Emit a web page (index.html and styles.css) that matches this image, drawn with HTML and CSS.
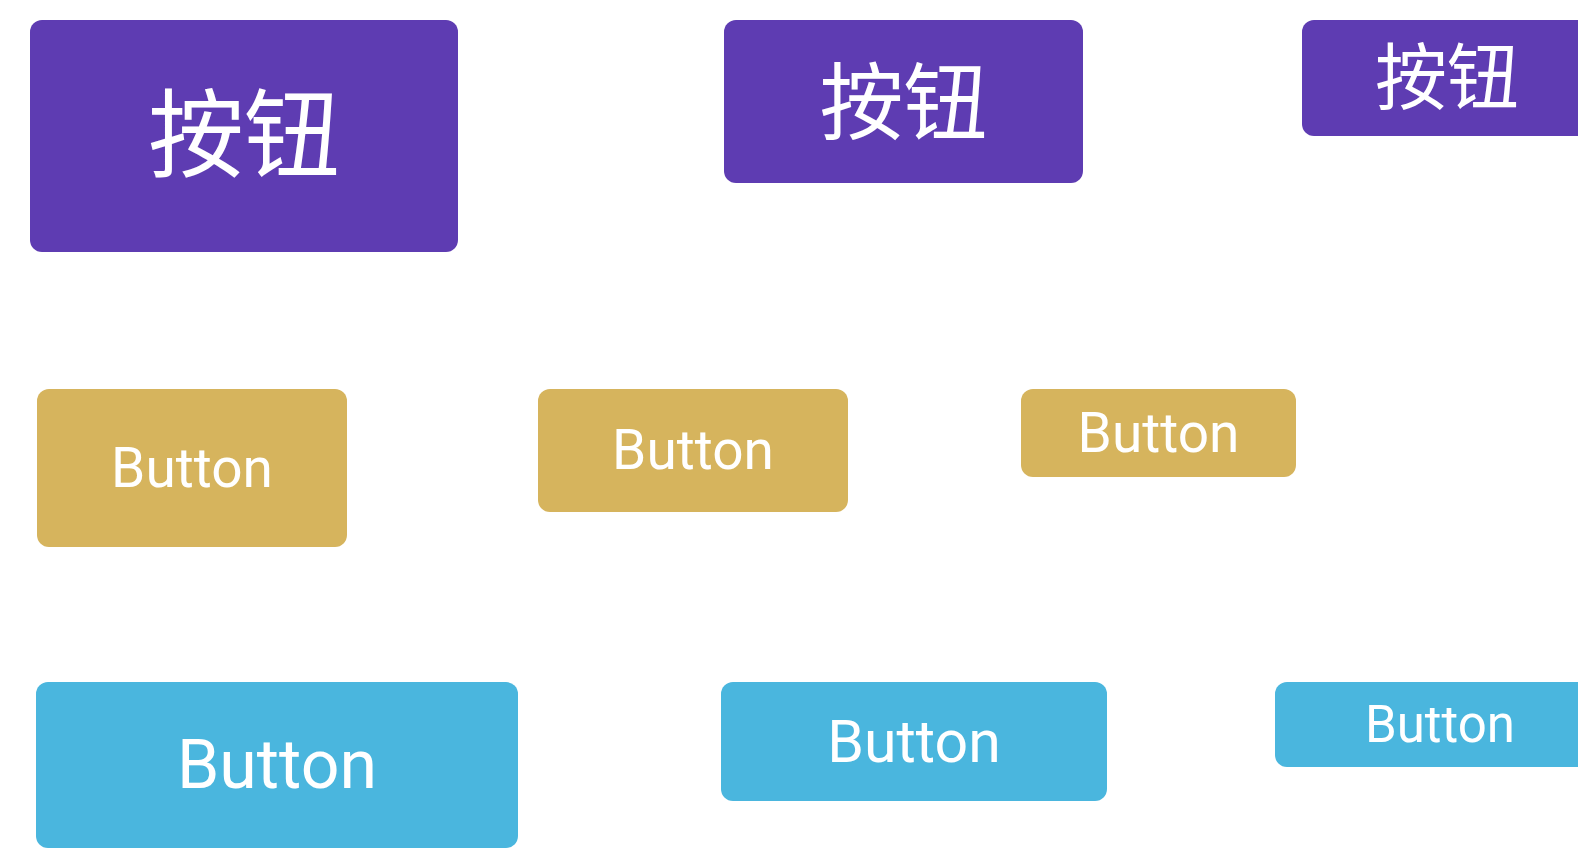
FILE: index.html
```html
<!DOCTYPE html>
<html lang="zh-CN">
<head>
  <meta charset="UTF-8">
  <title>Buttons</title>
  <meta name="viewport" content="width=device-width, initial-scale=1.0">
  <link rel="stylesheet" href="styles.css">
</head>
<body>
  <div class="board">
    <div class="row row-purple">
      <button class="btn purple p1">按钮</button>
      <button class="btn purple p2">按钮</button>
      <button class="btn purple p3">按钮</button>
    </div>

    <div class="row row-gold">
      <button class="btn gold g1">Button</button>
      <button class="btn gold g2">Button</button>
      <button class="btn gold g3">Button</button>
    </div>

    <div class="row row-blue">
      <button class="btn blue c1">Button</button>
      <button class="btn blue c2">Button</button>
      <button class="btn blue c3">Button</button>
    </div>
  </div>
</body>
</html>
```

FILE: styles.css
```css
* { box-sizing: border-box; }

html, body {
  margin: 0;
  height: 100%;
  overflow: hidden;
  background: #ffffff;
}

.board {
  padding-top: 20px;
}

.row {
  display: flex;
  align-items: flex-start;
  flex-wrap: nowrap;
}

.row-gold { margin-top: 137px; }
.row-blue { margin-top: 135px; }

.btn {
  flex-shrink: 0;
  display: flex;
  align-items: center;
  justify-content: center;
  border: none;
  border-radius: 12px;
  padding: 0;
  color: #ffffff;
  font-family: Roboto, "Noto Sans", sans-serif;
  line-height: 1;
  cursor: pointer;
}

/* purple row */
.purple {
  background: #5e3cb2;
  font-family: "Noto Sans CJK SC", "Noto Sans", sans-serif;
}

.p1 { margin-left: 30px; width: 428px; height: 232px; font-size: 96px; padding-bottom: 16px; }
.p2 { margin-left: 266px; width: 359px; height: 163px; font-size: 84px; padding-bottom: 10px; }
.p3 { margin-left: 219px; width: 290px; height: 116px; font-size: 72px; padding-bottom: 12px; }

/* gold row */
.gold {
  background: #d6b45d;
  font-size: 55px;
}

.g1 { margin-left: 37px; width: 310px; height: 158px; }
.g2 { margin-left: 191px; width: 310px; height: 123px; }
.g3 { margin-left: 173px; width: 275px; height: 88px; }

/* blue row */
.blue {
  background: #4ab6de;
}

.c1 { margin-left: 36px; width: 482px; height: 166px; font-size: 68px; }
.c2 { margin-left: 203px; width: 386px; height: 119px; font-size: 59px; }
.c3 { margin-left: 168px; width: 330px; height: 85px; font-size: 51px; }
```
